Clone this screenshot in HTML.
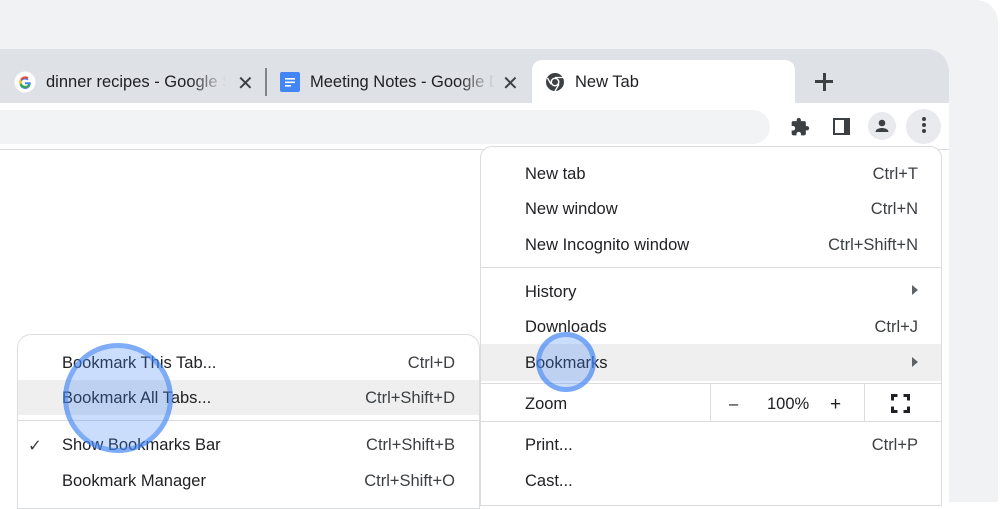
<!DOCTYPE html>
<html><head><style>
*{margin:0;padding:0;box-sizing:border-box}
body{width:1000px;height:502px;overflow:hidden;background:#fff;font-family:"Liberation Sans",Arial,sans-serif;color:#202124;position:relative}
.abs{position:absolute}
.t{font-size:16.5px;position:absolute;white-space:nowrap}
.r{text-align:right}
.fade{overflow:hidden;-webkit-mask-image:linear-gradient(to right,#000 80%,transparent);mask-image:linear-gradient(to right,#000 80%,transparent)}
</style></head><body>
<div class="abs" style="left:0;top:0;width:998px;height:502px;background:#f1f2f4;border-top-right-radius:22px"></div>
<div class="abs" style="left:0;top:49px;width:949px;height:453px;background:#fff;border-top-right-radius:22px;overflow:hidden">
  <div class="abs" style="left:0;top:0;width:949px;height:54px;background:#dee1e6"></div>
  <div class="abs" style="left:532px;top:11px;width:263px;height:50px;background:#fff;border-radius:10px 10px 0 0"></div>
  <div class="abs" style="left:0;top:61px;width:770px;height:34px;background:#f1f3f4;border-radius:0 17px 17px 0"></div>
  <div class="abs" style="left:0;top:100px;width:949px;height:1px;background:#dadce0"></div>
</div>
<svg class="abs" style="left:14px;top:71px" width="22" height="22" viewBox="0 0 22 22"><circle cx="11" cy="11" r="10.5" fill="#fff"/><path d="M16.5 11.2H11v2h3.2a3.6 3.6 0 1 1-1-3.8l1.4-1.4A5.6 5.6 0 1 0 16.6 11.2z" fill="#4285f4"/><path d="M6.2 8.3a5.6 5.6 0 0 1 8.4-1.7l-1.4 1.4a3.6 3.6 0 0 0-5.3 1.2z" fill="#ea4335"/><path d="M5.9 13.6a5.6 5.6 0 0 1 0-5.2l1.8 1.5a3.6 3.6 0 0 0 0 2.2z" fill="#fbbc05"/><path d="M5.9 13.6l1.8-1.5a3.6 3.6 0 0 0 6.5 1.1h2.2a5.6 5.6 0 0 1-10.5.4z" fill="#34a853"/></svg>
<div class="t fade" style="left:46px;top:73px;width:180px">dinner recipes - Google Search</div>
<div class="t" style="left:237px;top:71px;font-size:20px;color:#3c4043">✕</div>
<div class="abs" style="left:265px;top:68px;width:2px;height:28px;background:#80868b"></div>
<svg class="abs" style="left:280px;top:72px" width="20" height="20"><rect width="20" height="20" rx="2" fill="#4285f4"/><rect x="5" y="6" width="10" height="1.6" fill="#fff"/><rect x="5" y="9.5" width="10" height="1.6" fill="#fff"/><rect x="5" y="13" width="6" height="1.6" fill="#fff"/></svg>
<div class="t fade" style="left:310px;top:73px;width:185px">Meeting Notes - Google Docs</div>
<div class="t" style="left:502px;top:71px;font-size:20px;color:#3c4043">✕</div>
<svg class="abs" style="left:545px;top:72px" width="20" height="20" viewBox="0 0 20 20"><circle cx="10" cy="10" r="9" fill="#3c4043"/><circle cx="10" cy="10" r="4.5" fill="#fff"/><circle cx="10" cy="10" r="3" fill="#3c4043"/><path d="M10 5.5h8M6 12.3L2.5 6M14 12.3 10 19" stroke="#fff" stroke-width="1.3"/></svg>
<div class="t" style="left:575px;top:73px">New Tab</div>
<div class="abs" style="left:815px;top:80px;width:18px;height:3px;background:#3c4043"></div>
<div class="abs" style="left:822.5px;top:72.5px;width:3px;height:18px;background:#3c4043"></div>
<svg class="abs" style="left:790px;top:117px" width="20" height="20" viewBox="0 0 24 24"><path fill="#3c4043" d="M20.5 11H19V7a2 2 0 0 0-2-2h-4V3.5a2.5 2.5 0 0 0-5 0V5H4a2 2 0 0 0-2 2v3.8h1.5a2.7 2.7 0 0 1 0 5.4H2V20a2 2 0 0 0 2 2h3.8v-1.5a2.7 2.7 0 0 1 5.4 0V22H17a2 2 0 0 0 2-2v-4h1.5a2.5 2.5 0 0 0 0-5z"/></svg>
<div class="abs" style="left:833px;top:118px;width:17px;height:17px;border:2.5px solid #3c4043;border-right-width:6px"></div>
<div class="abs" style="left:868px;top:112px;width:28px;height:28px;border-radius:50%;background:#e8eaed"></div>
<svg class="abs" style="left:872px;top:116px" width="20" height="20" viewBox="0 0 20 20"><circle cx="10" cy="7" r="3.3" fill="#3c4043"/><path d="M3.5 16c0-3 4-4 6.5-4s6.5 1 6.5 4z" fill="#3c4043"/></svg>
<div class="abs" style="left:906px;top:109px;width:35px;height:35px;border-radius:50%;background:#e8eaed"></div>
<div class="abs" style="left:921.5px;top:117px;width:4px;height:4px;border-radius:50%;background:#3c4043;box-shadow:0 6px 0 #3c4043,0 12px 0 #3c4043"></div>
<div class="abs" style="left:480px;top:146px;width:462px;height:360px;background:#fff;border:1px solid #dadce0;border-radius:12px 12px 0 0"></div>
<div class="abs" style="left:481px;top:267px;width:460px;height:1px;background:#dadce0"></div>
<div class="abs" style="left:481px;top:344px;width:460px;height:37px;background:#efefef"></div>
<div class="abs" style="left:481px;top:383px;width:460px;height:1px;background:#dadce0"></div>
<div class="abs" style="left:481px;top:421px;width:460px;height:1px;background:#dadce0"></div>
<div class="abs" style="left:710px;top:384px;width:1px;height:37px;background:#dadce0"></div>
<div class="abs" style="left:864px;top:384px;width:1px;height:37px;background:#dadce0"></div>
<div class="t" style="left:525px;top:165px">New tab</div><div class="t r" style="right:82px;top:165px;color:#3c4043">Ctrl+T</div>
<div class="t" style="left:525px;top:200px">New window</div><div class="t r" style="right:82px;top:200px;color:#3c4043">Ctrl+N</div>
<div class="t" style="left:525px;top:236px">New Incognito window</div><div class="t r" style="right:82px;top:236px;color:#3c4043">Ctrl+Shift+N</div>
<div class="t" style="left:525px;top:283px">History</div>
<div class="abs" style="left:912px;top:285px;border-left:6px solid #5f6368;border-top:5px solid transparent;border-bottom:5px solid transparent"></div>
<div class="t" style="left:525px;top:318px">Downloads</div><div class="t r" style="right:82px;top:318px;color:#3c4043">Ctrl+J</div>
<div class="t" style="left:525px;top:354px">Bookmarks</div>
<div class="abs" style="left:912px;top:357px;border-left:6px solid #5f6368;border-top:5px solid transparent;border-bottom:5px solid transparent"></div>
<div class="t" style="left:525px;top:395px">Zoom</div>
<div class="t" style="left:729px;top:395px">–</div>
<div class="t" style="left:767px;top:395px">100%</div>
<div class="t" style="left:830px;top:394px;font-size:19px">+</div>
<svg class="abs" style="left:891px;top:394px" width="19" height="19"><path d="M1.5 6.5V1.5h5M12.5 1.5h5v5M17.5 12.5v5h-5M6.5 17.5h-5v-5" fill="none" stroke="#202124" stroke-width="3"/></svg>
<div class="t" style="left:525px;top:436px">Print...</div><div class="t r" style="right:82px;top:436px;color:#3c4043">Ctrl+P</div>
<div class="t" style="left:525px;top:472px">Cast...</div>
<div class="abs" style="left:17px;top:334px;width:463px;height:175px;background:#fff;border:1px solid #dadce0;border-radius:14px 14px 0 0"></div>
<div class="abs" style="left:18px;top:380px;width:461px;height:35px;background:#efefef"></div>
<div class="abs" style="left:18px;top:420px;width:461px;height:1px;background:#dadce0"></div>
<div class="t" style="left:62px;top:354px">Bookmark This Tab...</div><div class="t r" style="right:545px;top:354px;color:#3c4043">Ctrl+D</div>
<div class="t" style="left:62px;top:389px">Bookmark All Tabs...</div><div class="t r" style="right:545px;top:389px;color:#3c4043">Ctrl+Shift+D</div>
<div class="t" style="left:28px;top:436px;color:#3c4043">✓</div>
<div class="t" style="left:62px;top:436px">Show Bookmarks Bar</div><div class="t r" style="right:545px;top:436px;color:#3c4043">Ctrl+Shift+B</div>
<div class="t" style="left:62px;top:472px">Bookmark Manager</div><div class="t r" style="right:545px;top:472px;color:#3c4043">Ctrl+Shift+O</div>
<div class="abs" style="left:63px;top:343px;width:110px;height:110px;border-radius:50%;background:rgba(66,133,244,.28);border:5px solid rgba(66,133,244,.55)"></div>
<div class="abs" style="left:536px;top:332px;width:60px;height:60px;border-radius:50%;background:rgba(66,133,244,.28);border:5px solid rgba(66,133,244,.6)"></div>
</body></html>
